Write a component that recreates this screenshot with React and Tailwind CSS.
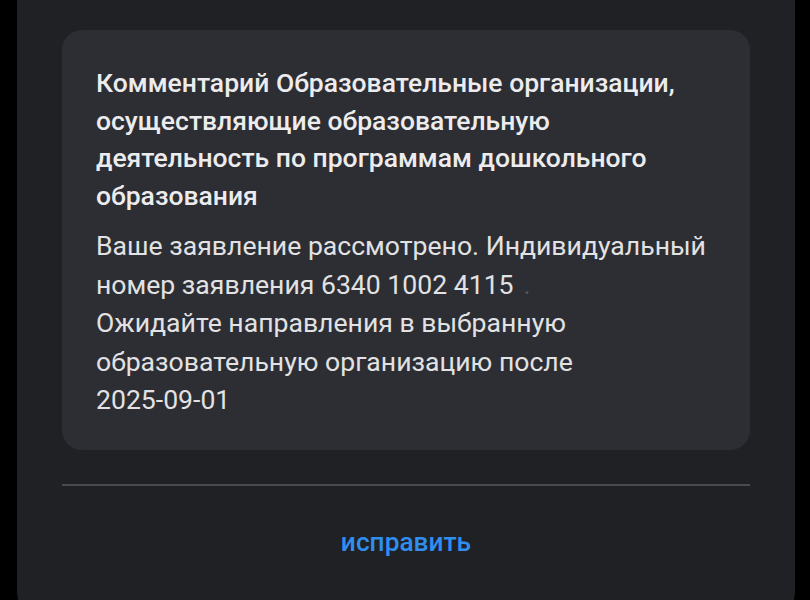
export default function App() {
  return (
    <div className="w-[810px] h-[600px] bg-black overflow-hidden" style={{ fontFamily: 'Roboto, "Noto Sans", sans-serif' }}>
      <div className="ml-[17px] mr-[15px] h-[625px] bg-[#202125] rounded-b-[34px] flex flex-col pl-[45px] pr-[45px] pt-[30px]">
        <div className="bg-[#2d2e33] rounded-[20px] pl-[34px] pr-[20px] pt-[34px] pb-[30px]">
          <div className="text-[26.5px] leading-[37.5px] font-medium text-[#ececee] whitespace-nowrap">
            Комментарий Образовательные организации,
            <br />
            осуществляющие образовательную
            <br />
            деятельность по программам дошкольного
            <br />
            образования
          </div>
          <div className="mt-[13px] text-[26.6px] leading-[38.5px] text-[#e2e2e4] whitespace-nowrap">
            Ваше заявление рассмотрено. Индивидуальный
            <br />
            номер заявления 6340 1002 4115
            <span className="ml-[10px] text-[#55565b]">.</span>
            <br />
            Ожидайте направления в выбранную
            <br />
            образовательную организацию после
            <br />
            2025-09-01
          </div>
        </div>
        <div className="mt-[34px] h-[2px] bg-[#4a4b50]" />
        <div className="flex justify-center pt-[37px]">
          <span className="text-[26.3px] font-medium text-[#2f8ef0]">исправить</span>
        </div>
      </div>
    </div>
  );
}
